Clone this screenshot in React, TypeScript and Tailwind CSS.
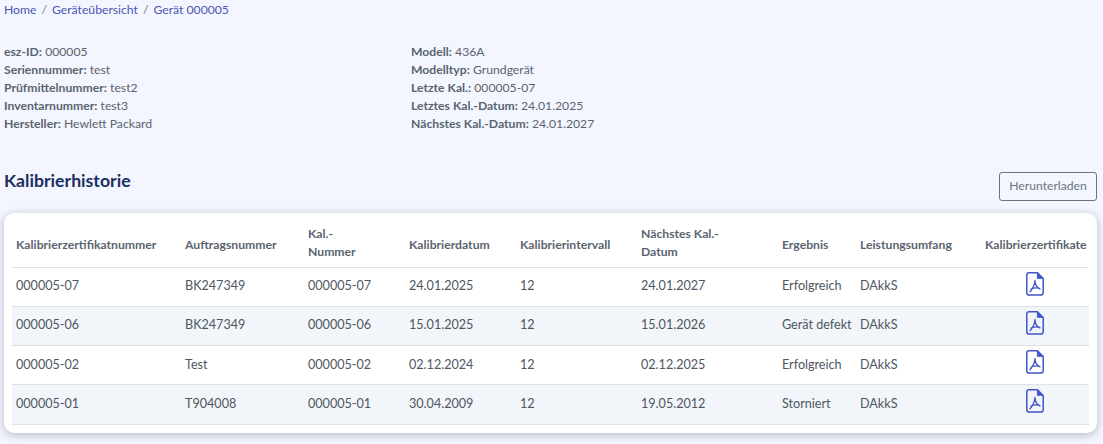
const leftInfo = [
  ["esz-ID:", "000005"],
  ["Seriennummer:", "test"],
  ["Prüfmittelnummer:", "test2"],
  ["Inventarnummer:", "test3"],
  ["Hersteller:", "Hewlett Packard"],
];

const rightInfo = [
  ["Modell:", "436A"],
  ["Modelltyp:", "Grundgerät"],
  ["Letzte Kal.:", "000005-07"],
  ["Letztes Kal.-Datum:", "24.01.2025"],
  ["Nächstes Kal.-Datum:", "24.01.2027"],
];

const rows = [
  ["000005-07", "BK247349", "000005-07", "24.01.2025", "12", "24.01.2027", "Erfolgreich", "DAkkS"],
  ["000005-06", "BK247349", "000005-06", "15.01.2025", "12", "15.01.2026", "Gerät defekt", "DAkkS"],
  ["000005-02", "Test", "000005-02", "02.12.2024", "12", "02.12.2025", "Erfolgreich", "DAkkS"],
  ["000005-01", "T904008", "000005-01", "30.04.2009", "12", "19.05.2012", "Storniert", "DAkkS"],
];

const columns = [
  { label: "Kalibrierzertifikatnummer", cls: "w-[169px] pt-[10px]" },
  { label: "Auftragsnummer", cls: "w-[123px] pt-[10px]" },
  { label: "Kal.-\nNummer", cls: "w-[101px] pt-[6px]" },
  { label: "Kalibrierdatum", cls: "w-[111px] pt-[10px]" },
  { label: "Kalibrierintervall", cls: "w-[121px] pt-[10px]" },
  { label: "Nächstes Kal.-\nDatum", cls: "w-[141px] pt-[6px]" },
  { label: "Ergebnis", cls: "w-[78px] pt-[10px]" },
  { label: "Leistungsumfang", cls: "w-[125px] pt-[10px]" },
  { label: "Kalibrierzertifikate", cls: "w-[108px] pt-[10px]" },
];

const InfoList = ({ items }: { items: string[][] }) => (
  <div className="flex flex-col">
    {items.map(([label, value]) => (
      <p key={label} className="h-[18px] leading-[18px] whitespace-nowrap">
        <span className="font-bold">{label}</span> {value}
      </p>
    ))}
  </div>
);

const PdfIcon = () => (
  <svg viewBox="0 0 18 24" className="mx-auto -mt-1.5 h-6 w-[18px] text-[#4055c8]" fill="none" stroke="currentColor" strokeLinejoin="round" strokeLinecap="round">
    <path strokeWidth="1.5" d="M3 .8H11.5L17.2 6.5V20.7A2.4 2.4 0 0 1 14.8 23.1H3.2A2.4 2.4 0 0 1 .8 20.7V3A2.2 2.2 0 0 1 3 .8Z" />
    <path fill="currentColor" strokeWidth="1" d="M11.7 1.2L16.8 6.3H11.7Z" />
    <path strokeWidth="1.3" d="M9 8.5C8.6 12 7 16.5 4 19.8M9 8.5C9 12.5 10.5 15.5 14 16.8C12 15.8 8.5 15.5 5 17" />
  </svg>
);

export default function App() {
  return (
    <div className="h-[444px] w-[1103px] overflow-hidden bg-[#f3f6fe] font-['Lato',sans-serif] text-[12.2px] text-[#5a6470]">
      {/* Breadcrumb */}
      <nav className="flex h-[18px] items-center gap-[5px] pl-1 pt-0.5 text-[#4d55b3]">
        <a>Home</a>
        <span className="text-[#6c757d]">/</span>
        <a>Geräteübersicht</a>
        <span className="text-[#6c757d]">/</span>
        <a>Gerät 000005</a>
      </nav>

      <div className="mt-[25px] flex pl-1">
        <div className="w-[407px]">
          <InfoList items={leftInfo} />
        </div>
        <InfoList items={rightInfo} />
      </div>

      <div className="mt-[36px] flex items-start justify-between pl-1 pr-1.5">
        <h2 className="text-[17.7px] font-bold leading-[24px] text-[#1c2f5f]">Kalibrierhistorie</h2>
        <button className="mt-[3px] h-[29px] w-[98px] rounded-[3px] border border-[#6c757d] text-[#6c757d]">
          Herunterladen
        </button>
      </div>

      {/* Table card */}
      <div className="mx-1 mt-[12px] w-[1093px] rounded-[10px] bg-white px-2 pb-2 shadow-[0_2px_8px_rgba(60,70,100,0.35)]">
        <table className="w-[1077px] table-fixed border-collapse">
          <thead>
            <tr className="h-[54px] border-b border-[#dee2e6] text-left">
              {columns.map((col) => (
                <th key={col.label} className={`${col.cls} whitespace-pre-line px-1 font-bold leading-[18px]`}>
                  {col.label}
                </th>
              ))}
            </tr>
          </thead>
          <tbody>
            {rows.map((row, i) => (
              <tr key={row[0]} className={`h-[39.25px] border-b border-[#dee2e6] text-[12.6px] text-[#4d5762] ${i % 2 === 1 ? "bg-[#f2f5f9]" : ""}`}>
                {row.map((cell, j) => (
                  <td key={j} className="whitespace-nowrap px-1">
                    {cell}
                  </td>
                ))}
                <td className="px-1">
                  <PdfIcon />
                </td>
              </tr>
            ))}
          </tbody>
        </table>
      </div>
    </div>
  );
}
